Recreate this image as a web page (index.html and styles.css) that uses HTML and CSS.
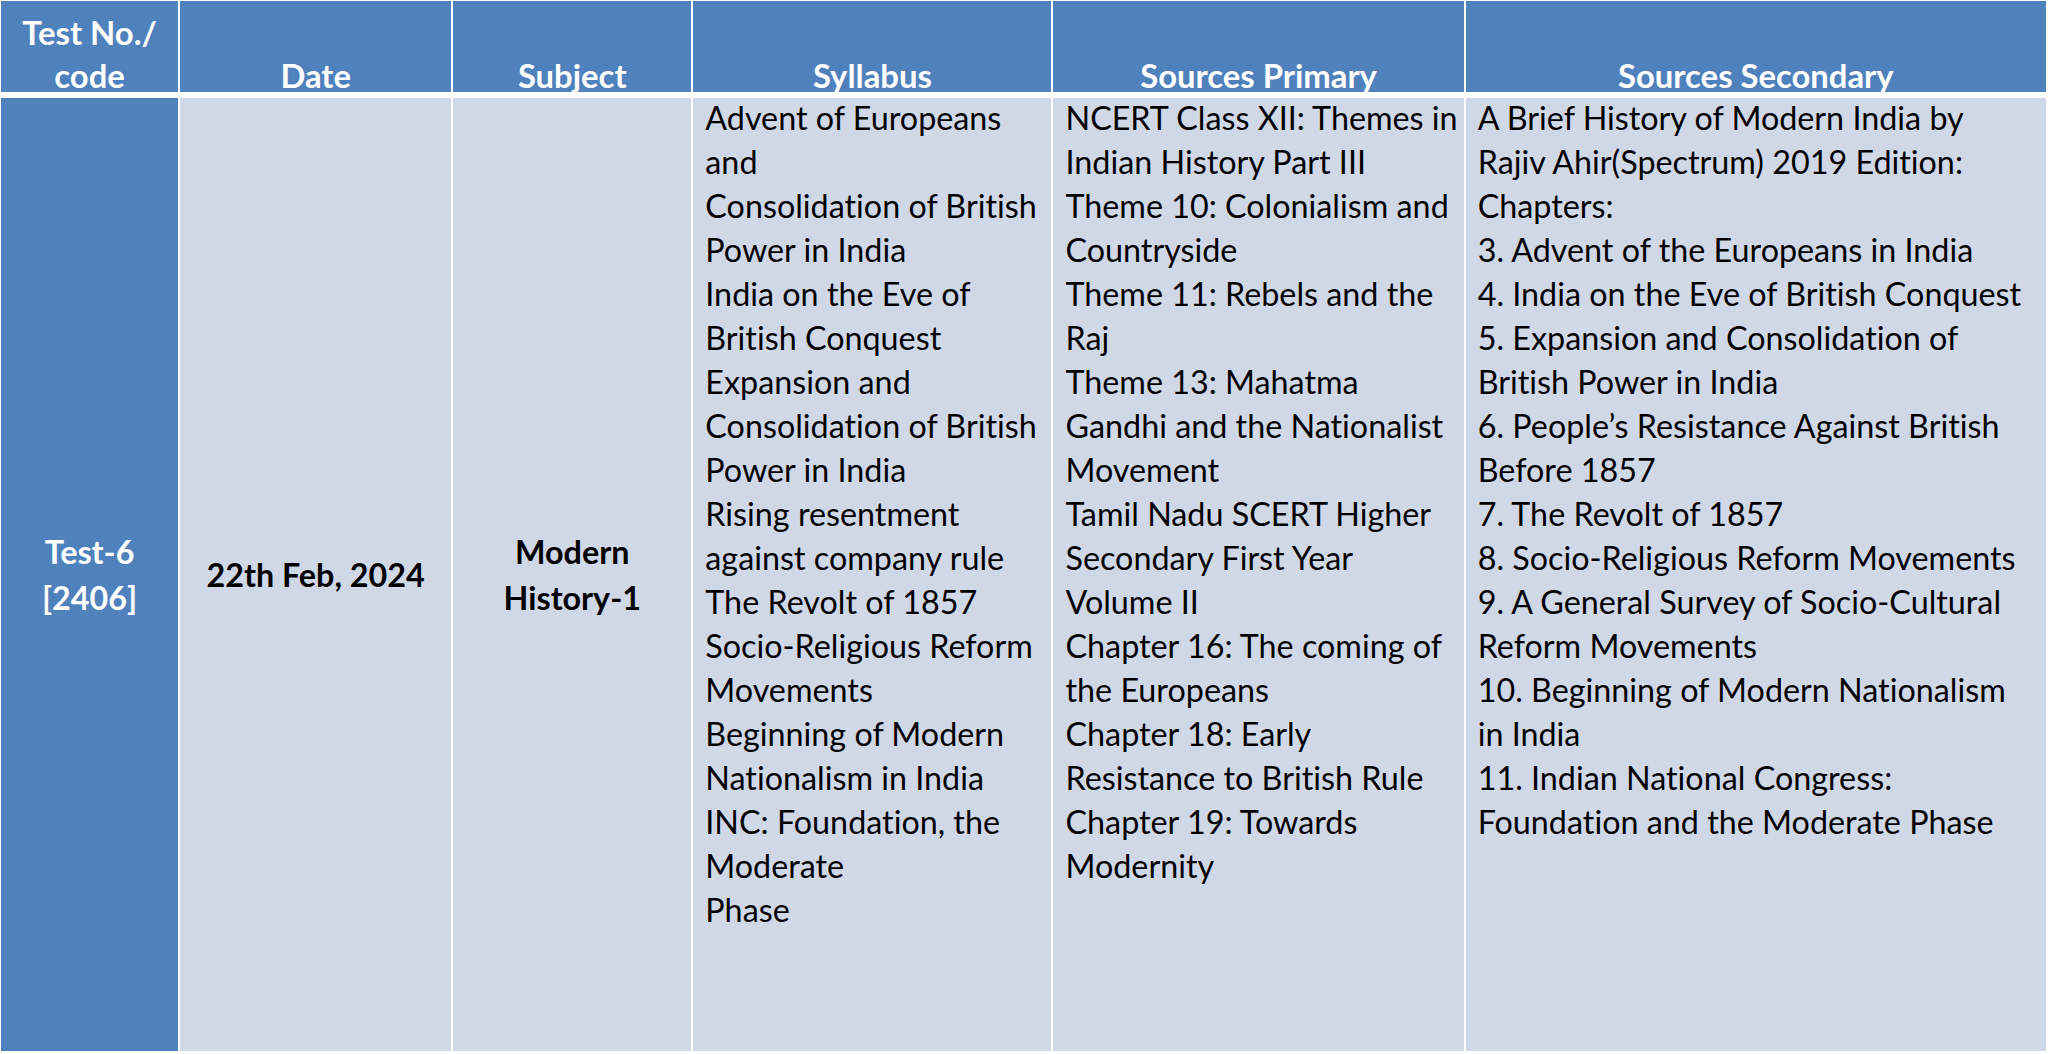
FILE: index.html
```html
<!DOCTYPE html>
<html lang="en">
<head>
<meta charset="utf-8">
<title>Test Schedule</title>
<link rel="stylesheet" href="styles.css">
</head>
<body>
<table class="schedule">
  <colgroup>
    <col class="c-code">
    <col class="c-date">
    <col class="c-subject">
    <col class="c-syllabus">
    <col class="c-primary">
    <col class="c-secondary">
  </colgroup>
  <thead>
    <tr>
      <th><div class="head">Test No./<br>code</div></th>
      <th><div class="head">Date</div></th>
      <th><div class="head">Subject</div></th>
      <th><div class="head">Syllabus</div></th>
      <th><div class="head">Sources Primary</div></th>
      <th><div class="head">Sources Secondary</div></th>
    </tr>
  </thead>
  <tbody>
    <tr>
      <td class="code">Test-6<br>[2406]</td>
      <td class="center">22th Feb, 2024</td>
      <td class="center">Modern<br>History-1</td>
      <td class="list"><div class="lines">Advent of Europeans<br>and<br>Consolidation of British<br>Power in India<br>India on the Eve of<br>British Conquest<br>Expansion and<br>Consolidation of British<br>Power in India<br>Rising resentment<br>against company rule<br>The Revolt of 1857<br>Socio-Religious Reform<br>Movements<br>Beginning of Modern<br>Nationalism in India<br>INC: Foundation, the<br>Moderate<br>Phase</div></td>
      <td class="list"><div class="lines">NCERT Class XII: Themes in<br>Indian History Part III<br>Theme 10: Colonialism and<br>Countryside<br>Theme 11: Rebels and the<br>Raj<br>Theme 13: Mahatma<br>Gandhi and the Nationalist<br>Movement<br>Tamil Nadu SCERT Higher<br>Secondary First Year<br>Volume II<br>Chapter 16: The coming of<br>the Europeans<br>Chapter 18: Early<br>Resistance to British Rule<br>Chapter 19: Towards<br>Modernity</div></td>
      <td class="list"><div class="lines">A Brief History of Modern India by<br>Rajiv Ahir(Spectrum) 2019 Edition:<br>Chapters:<br>3. Advent of the Europeans in India<br>4. India on the Eve of British Conquest<br>5. Expansion and Consolidation of<br>British Power in India<br>6. People’s Resistance Against British<br>Before 1857<br>7. The Revolt of 1857<br>8. Socio-Religious Reform Movements<br>9. A General Survey of Socio-Cultural<br>Reform Movements<br>10. Beginning of Modern Nationalism<br>in India<br>11. Indian National Congress:<br>Foundation and the Moderate Phase</div></td>
    </tr>
  </tbody>
</table>
</body>
</html>
```

FILE: styles.css
```css
html, body {
  margin: 0;
  padding: 0;
  background: #ffffff;
}

body {
  font-family: Lato, "Open Sans", "Liberation Sans", sans-serif;
  font-size: 32.3px;
  font-variant-ligatures: no-common-ligatures;
  color: #000000;
}

.schedule {
  border-collapse: separate;
  border-spacing: 2px 0;
  margin: 1px 0 0 -1px;
  table-layout: fixed;
  width: 2049px;
}

.c-code { width: 177px; }
.c-date { width: 271px; }
.c-subject { width: 238px; }
.c-syllabus { width: 358px; }
.c-primary { width: 410px; }
.c-secondary { width: 580px; }

.schedule th {
  box-sizing: border-box;
  height: 97px;
  padding: 0 4px;
  background: #4f81bd;
  border-bottom: 6px solid #ffffff;
  color: #ffffff;
  font-size: 32.8px;
  font-weight: 700;
  line-height: 43px;
  text-align: center;
  vertical-align: bottom;
  white-space: nowrap;
}

.head {
  margin-bottom: -5px;
}

.schedule td {
  box-sizing: border-box;
  height: 953px;
  background: #d0d8e8;
  padding: 0;
  white-space: nowrap;
}

.schedule td.code {
  background: #4f81bd;
  color: #ffffff;
  font-weight: 700;
  text-align: center;
  vertical-align: middle;
  line-height: 46px;
}

.schedule td.center {
  font-weight: 700;
  text-align: center;
  vertical-align: middle;
  line-height: 46px;
}

.schedule td.list {
  vertical-align: top;
  text-align: left;
  padding: 0 0 0 12px;
  line-height: 44px;
}

.lines {
  margin-top: -2px;
}
```
